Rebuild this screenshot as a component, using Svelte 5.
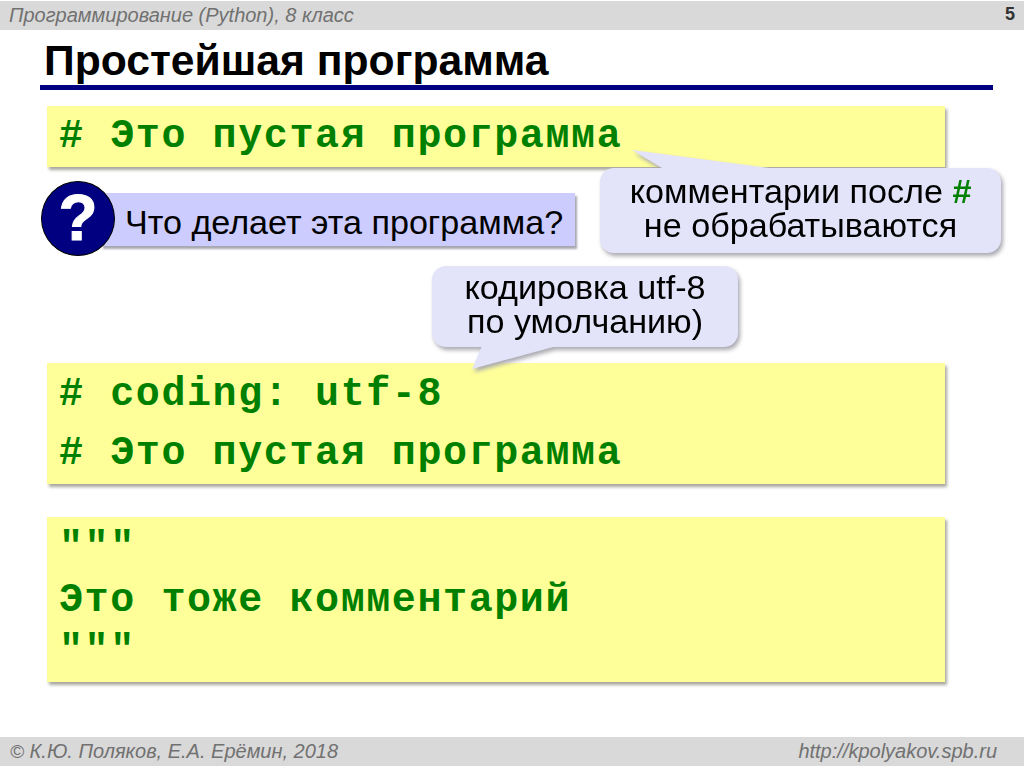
<script>
    const emptyProgram = "# Это пустая программа";
    const blocks = [
        { top: 107, lines: ["# coding: utf-8", emptyProgram] },
        { top: 33, lines: ['"""', "Это тоже комментарий", '"""'] }
    ];
</script>

<div class="slide">
    <header class="top-bar">
        <span>Программирование (Python), 8 класс</span>
        <b>5</b>
    </header>

    <h1>Простейшая программа</h1>

    <div class="code first"><p>{emptyProgram}</p></div>

    <div class="question">
        <div class="question-icon">?</div>
        <div class="question-text">Что делает эта программа?</div>
    </div>

    {#each blocks as block}
        <div class="code" class:two={block.lines.length === 2} class:three={block.lines.length === 3} style="margin-top: {block.top}px">
            {#each block.lines as line}
                <p>{line}</p>
            {/each}
        </div>
    {/each}

    <footer class="bottom-bar">
        <span><span class="copy">©</span> К.Ю. Поляков, Е.А. Ерёмин, 2018</span>
        <span>http://kpolyakov.spb.ru</span>
    </footer>

    <!-- callouts lie over the slide -->
    <div class="callout callout-comment">
        <svg class="tail" width="140" height="20" viewBox="0 0 140 20">
            <path d="M0 0 L137 18 L137 20 L30 20 L30 18 Z" fill="#e3e4fa" />
        </svg>
        <div>комментарии после <span class="hash">#</span></div>
        <div>не обрабатываются</div>
    </div>

    <div class="callout callout-coding">
        <svg class="tail" width="86" height="24" viewBox="0 0 86 24">
            <path d="M0 23 L10 0 L85 0 Z" fill="#e3e4fa" />
        </svg>
        <div>кодировка utf-8</div>
        <div>по умолчанию)</div>
    </div>
</div>

<style>
    :global(body) {
        margin: 0;
        background: #fff;
    }

    .slide {
        position: relative;
        width: 1024px;
        height: 767px;
        overflow: hidden;
        display: flex;
        flex-direction: column;
        font-family: "Liberation Sans", Arial, sans-serif;
        color: #000;
    }

    .top-bar,
    .bottom-bar {
        display: flex;
        justify-content: space-between;
        align-items: center;
        background: #d9d9d9;
        color: #717171;
        font-style: italic;
        font-size: 20px;
        flex-shrink: 0;
    }

    .top-bar {
        height: 29px;
        margin-top: 1px;
        padding: 0 9px 0 9px;
    }

    .top-bar b {
        font-style: normal;
        font-size: 18px;
        color: #333;
        margin-top: -3px;
    }

    h1 {
        margin: 9px 0 0 40px;
        width: 953px;
        height: 51px;
        box-sizing: border-box;
        border-bottom: 5px solid #000080;
        padding-left: 4px;
        font-size: 42.67px;
        line-height: 43px;
        font-weight: bold;
    }

    .code {
        margin-left: 47px;
        width: 898px;
        box-sizing: border-box;
        background: #ffff99;
        padding-left: 12px;
        box-shadow: 2px 3px 3px #a8a8a0;
        font-family: "Liberation Mono", "Courier New", monospace;
        font-weight: bold;
        font-size: 40px;
        letter-spacing: 1.6px;
        color: #008000;
    }

    .code p {
        margin: 0;
        line-height: 59px;
    }

    .code.first {
        margin-top: 16px;
        height: 61px;
        padding-top: 1px;
    }

    .code.two {
        height: 121px;
        padding-top: 2px;
    }

    .code.three {
        height: 165px;
        padding-top: 6px;
    }

    .code.three p {
        line-height: 51.5px;
    }

    .question {
        display: flex;
        align-items: center;
        margin: 14px 0 0 41px;
        height: 75px;
    }

    .question-icon {
        position: relative;
        z-index: 1;
        width: 74px;
        height: 75px;
        border-radius: 50%;
        background: #000080;
        border: 1px solid #000;
        box-sizing: border-box;
        color: #fff;
        font-size: 64px;
        font-weight: bold;
        -webkit-text-stroke: 1px #fff;
        line-height: 73px;
        text-align: center;
        flex-shrink: 0;
    }

    .question-text {
        margin: 2px 0 0 -14px;
        width: 474px;
        height: 53px;
        box-sizing: border-box;
        background: #ccccff;
        box-shadow: 2px 3px 2px #a8a8b0;
        padding-left: 24px;
        font-size: 34.13px;
        line-height: 58px;
        white-space: nowrap;
    }

    .bottom-bar {
        margin-top: auto;
        height: 29px;
        margin-bottom: 1px;
        padding: 0 27px 0 10px;
    }

    .copy {
        font-size: 19px;
    }

    .callout {
        position: absolute;
        box-sizing: border-box;
        background: #e3e4fa;
        border-radius: 14px;
        filter: drop-shadow(2px 3px 2px #a8a8b0);
        font-size: 34.13px;
        line-height: 34px;
        text-align: center;
        white-space: nowrap;
    }

    .tail {
        position: absolute;
        display: block;
    }

    .hash {
        color: #008000;
        font-weight: bold;
    }

    .callout-comment {
        left: 600px;
        top: 168px;
        width: 401px;
        height: 85px;
        padding-top: 6px;
    }

    .callout-comment .tail {
        left: 32px;
        top: -18px;
    }

    .callout-coding {
        left: 432px;
        top: 266px;
        width: 306px;
        height: 81px;
        padding-top: 4px;
    }

    .callout-coding .tail {
        left: 40px;
        top: 80px;
    }
</style>
